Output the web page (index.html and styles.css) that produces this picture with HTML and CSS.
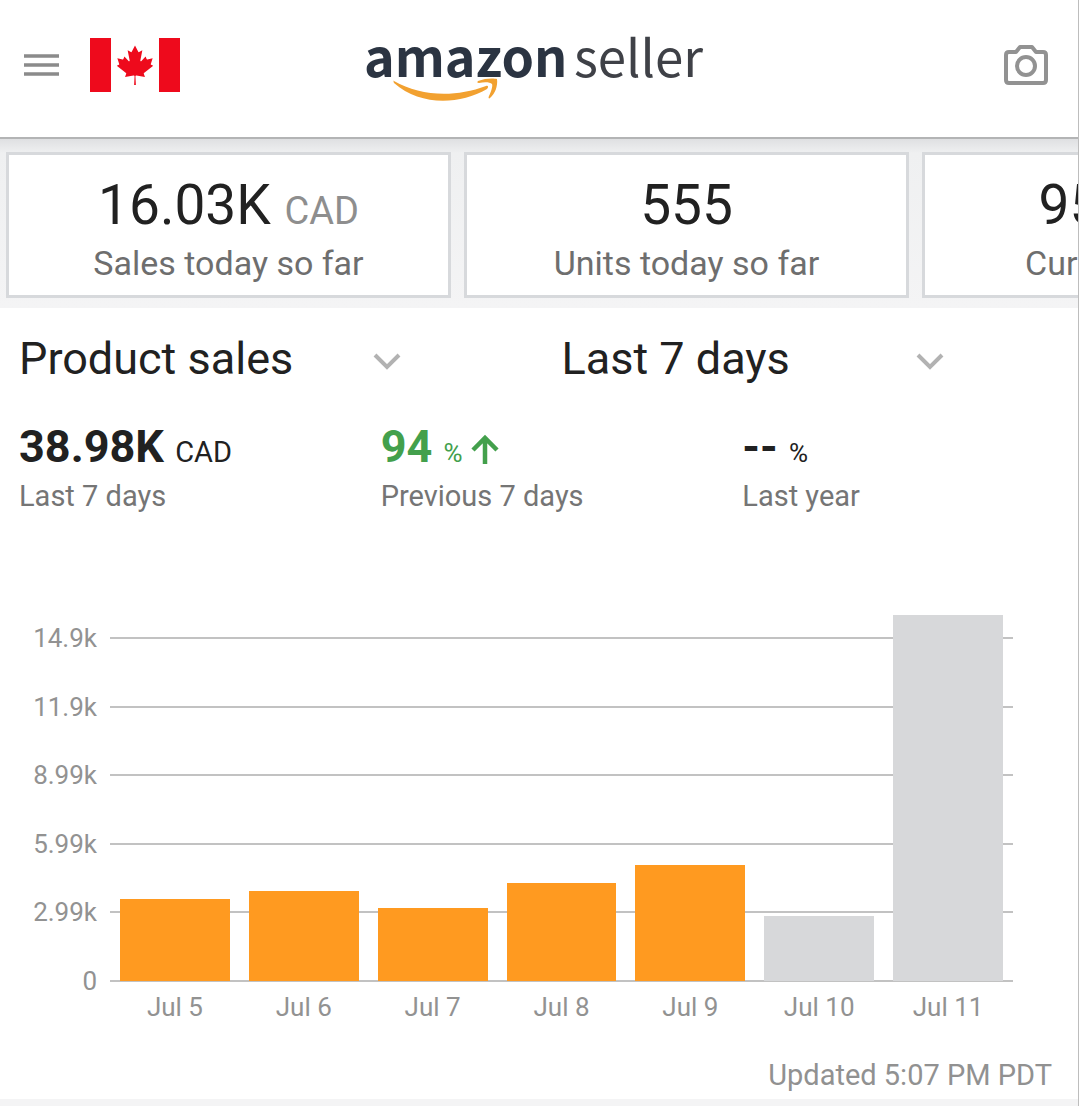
FILE: index.html
```html
<!DOCTYPE html>
<html lang="en">
<head>
    <meta charset="UTF-8">
    <meta name="viewport" content="width=device-width, initial-scale=1.0">
    <title>Amazon Seller</title>
    <link rel="stylesheet" href="styles.css">
</head>
<body>
    <div class="app">
        <header class="header">
            <div class="header-left">
                <button class="icon-button" type="button" aria-label="Menu">
                    <svg width="35" height="24" viewBox="0 0 35 24">
                        <path d="M0 3h35M0 12h35M0 21h35" stroke="#8b8b8b" stroke-width="3.6"/>
                    </svg>
                </button>
                <button class="icon-button" type="button" aria-label="Marketplace: Canada">
                    <svg width="90" height="54" viewBox="0 0 90 54">
                        <path d="M0 0h21v54H0zM69 0h21v54H69z" fill="#ee0a1c"/>
                        <path transform="translate(45 27) scale(.0098)" fill="#ee0a1c" d="m-90 2030 45-863a95 95 0 0 0-111-98l-859 151 116-320a65 65 0 0 0-20-73l-941-762 212-99a65 65 0 0 0 34-79l-186-572 542 115a65 65 0 0 0 73-38l105-247 423 454a65 65 0 0 0 111-57l-204-1052 327 189a65 65 0 0 0 91-27l332-652 332 652a65 65 0 0 0 91 27l327-189-204 1052a65 65 0 0 0 111 57l423-454 105 247a65 65 0 0 0 73 38l542-115-186 572a65 65 0 0 0 34 79l212 99-941 762a65 65 0 0 0-20 73l116 320-859-151a95 95 0 0 0-111 98l45 863z"/>
                    </svg>
                </button>
            </div>
            <svg class="logo" width="340" height="80" viewBox="0 0 340 80" role="img" aria-label="amazon seller">
                <text class="logo-bold" x="-2" y="52">amazon</text>
                <text class="logo-light" x="208" y="52">seller</text>
                <path d="M28 56C54 71 88 73 120 61C122 60 123 62 121 64C93 80 54 81 28 58C27 56 28 55 28 56Z" fill="#f2a130"/>
                <path d="M112 56C119 53 128 53 131 54C132 61 129 69 124 73C123 74 122 73 123 71C125 67 127 61 126 59C124 57 118 57 113 58C111 58 111 57 112 56Z" fill="#f2a130"/>
            </svg>
            <button class="icon-button camera" type="button" aria-label="Camera">
                <svg width="44" height="42" viewBox="0 0 44 42" fill="none" stroke="#929292" stroke-width="4" stroke-linejoin="round">
                    <path d="M5 8H12L16 3H28L32 8H39Q42 8 42 11V36Q42 39 39 39H5Q2 39 2 36V11Q2 8 5 8Z"/>
                    <circle cx="22" cy="22" r="9"/>
                </svg>
            </button>
        </header>

        <section class="cards">
            <div class="card">
                <div class="card-value">16.03K <span class="card-unit">CAD</span></div>
                <div class="card-label">Sales today so far</div>
            </div>
            <div class="card">
                <div class="card-value">555</div>
                <div class="card-label">Units today so far</div>
            </div>
            <div class="card">
                <div class="card-value">9584 <span class="card-unit">CAD</span></div>
                <div class="card-label">Current balance</div>
            </div>
        </section>

        <main class="report">
            <div class="filters">
                <div class="filter">
                    <select aria-label="Metric">
                        <option>Product sales</option>
                    </select>
                    <svg class="chevron" width="28" height="18" viewBox="0 0 28 18">
                        <path d="M2 3L14 15L26 3" fill="none" stroke="#b2b2b2" stroke-width="4"/>
                    </svg>
                </div>
                <div class="filter">
                    <select aria-label="Period">
                        <option>Last 7 days</option>
                    </select>
                    <svg class="chevron" width="28" height="18" viewBox="0 0 28 18">
                        <path d="M2 3L14 15L26 3" fill="none" stroke="#b2b2b2" stroke-width="4"/>
                    </svg>
                </div>
            </div>

            <div class="stats">
                <div class="stat">
                    <div class="stat-value">38.98K <span class="stat-unit">CAD</span></div>
                    <div class="stat-label">Last 7 days</div>
                </div>
                <div class="stat">
                    <div class="stat-value up">94 <span class="stat-unit percent">%</span><svg class="arrow" width="28" height="30" viewBox="0 0 28 30">
                            <path d="M14 30V4M2 16L14 4L26 16" fill="none" stroke="#43a04c" stroke-width="4.5"/>
                        </svg>
                    </div>
                    <div class="stat-label">Previous 7 days</div>
                </div>
                <div class="stat">
                    <div class="stat-value">-- <span class="stat-unit percent">%</span></div>
                    <div class="stat-label">Last year</div>
                </div>
            </div>

            <div class="chart">
                <div class="plot">
                    <div class="scale">
                        <div class="tick"><span>14.9k</span></div>
                        <div class="tick"><span>11.9k</span></div>
                        <div class="tick"><span>8.99k</span></div>
                        <div class="tick"><span>5.99k</span></div>
                        <div class="tick"><span>2.99k</span></div>
                        <div class="tick"><span>0</span></div>
                    </div>
                    <div class="bars">
                        <div class="bar" style="height: 22.4%"></div>
                        <div class="bar" style="height: 24.6%"></div>
                        <div class="bar" style="height: 20%"></div>
                        <div class="bar" style="height: 26.7%"></div>
                        <div class="bar" style="height: 31.7%"></div>
                        <div class="bar muted" style="height: 17.8%"></div>
                        <div class="bar muted" style="height: 100%"></div>
                    </div>
                </div>
                <div class="days">
                    <span>Jul 5</span>
                    <span>Jul 6</span>
                    <span>Jul 7</span>
                    <span>Jul 8</span>
                    <span>Jul 9</span>
                    <span>Jul 10</span>
                    <span>Jul 11</span>
                </div>
            </div>

            <p class="updated">Updated 5:07 PM PDT</p>
        </main>
    </div>
</body>
</html>
```

FILE: styles.css
```css
* {
    box-sizing: border-box;
}

body {
    margin: 0;
    background: #fff;
    font-family: Roboto, sans-serif;
    color: #212121;
}

.app {
    min-height: 100vh;
    margin-right: 1px;
    border-right: 1px solid #bdbdbd;
    background: #f4f4f5;
    overflow: hidden;
}

.header {
    display: grid;
    grid-template-columns: 1fr auto 1fr;
    align-items: center;
    padding: 25px 30px 32px 24px;
    background: #fff;
    border-bottom: 2px solid #b3b4b5;
}

.header-left {
    display: flex;
    align-items: center;
    gap: 31px;
}

.icon-button {
    display: flex;
    padding: 0;
    border: 0;
    background: none;
    cursor: pointer;
}

.camera {
    justify-self: end;
}

.logo {
    overflow: visible;
}

.logo-bold,
.logo-light {
    font-family: "Noto Sans CJK SC", Roboto, sans-serif;
    font-size: 51px;
    fill: #3f4147;
}

.logo-bold {
    font-size: 52px;
    font-weight: bold;
    fill: #2b3442;
}

/* today cards */
.cards {
    display: flex;
    gap: 13px;
    padding: 13px 0 10px 6px;
    background: linear-gradient(#dfe0e2, #eff0f1 14px, #f4f4f5);
    overflow: hidden;
}

.card {
    flex: 0 0 445px;
    padding: 18px 0 10px;
    border: 3px solid #d7d9dc;
    background: #fff;
    text-align: center;
    white-space: nowrap;
}

.card-value {
    font-size: 55px;
    line-height: 64px;
}

.card-unit {
    font-size: 38px;
    line-height: 1;
    color: #8e8e8e;
}

.card-label {
    margin-top: 4px;
    font-size: 34px;
    line-height: 44px;
    color: #6e6e6e;
}

/* report */
.report {
    padding: 21px 0 4px;
    background: #fff;
}

.filters,
.stats {
    display: grid;
    gap: 26px;
    padding-left: 19px;
}

.filters {
    grid-template-columns: repeat(2, 1fr);
}

.filter {
    display: grid;
    align-items: center;
    width: 74%;
}

.filter select,
.filter .chevron {
    grid-area: 1 / 1;
}

.filter select {
    appearance: none;
    width: 100%;
    height: 60px;
    padding: 0;
    border: 0;
    background: none;
    font: 45px/60px Roboto, sans-serif;
    color: #212121;
}

.chevron {
    justify-self: end;
    margin-top: 4px;
    pointer-events: none;
}

.stats {
    grid-template-columns: repeat(3, 1fr);
    padding-top: 31px;
}

.stat-value {
    font-size: 45px;
    font-weight: bold;
    line-height: 54px;
}

.stat-unit {
    font-size: 29px;
    font-weight: normal;
    line-height: 1;
}

.percent {
    font-size: 26px;
}

.stat-value.up {
    color: #43a04c;
}

.arrow {
    margin-left: 8px;
    vertical-align: -2px;
}

.stat-label {
    font-size: 29px;
    line-height: 44px;
    color: #757575;
}

/* bar chart */
.chart {
    padding: 97px 65px 0 32px;
    font-size: 26px;
    line-height: 30px;
    color: #929292;
}

.plot {
    display: grid;
}

.scale,
.bars {
    grid-area: 1 / 1;
}

.scale {
    display: flex;
    flex-direction: column;
    justify-content: space-between;
    height: 381px;
    padding-top: 8px;
}

.tick {
    display: flex;
    align-items: center;
    gap: 13px;
}

.tick span {
    width: 65px;
    text-align: right;
}

.tick::after {
    content: "";
    flex: 1;
    height: 2px;
    background: #c2c2c2;
}

.bars,
.days {
    display: grid;
    grid-template-columns: repeat(7, 1fr);
    gap: 19px;
    margin-left: 78px;
    padding: 0 10px;
}

.bars {
    align-items: end;
    margin-bottom: 15px;
}

.bar {
    background: #ff9a20;
}

.bar.muted {
    background: #d7d8da;
}

.days {
    line-height: 22px;
    text-align: center;
    white-space: nowrap;
}

.updated {
    margin: 0;
    padding: 37px 26px 0 0;
    font-size: 29px;
    line-height: 40px;
    text-align: right;
    color: #919191;
}
```
